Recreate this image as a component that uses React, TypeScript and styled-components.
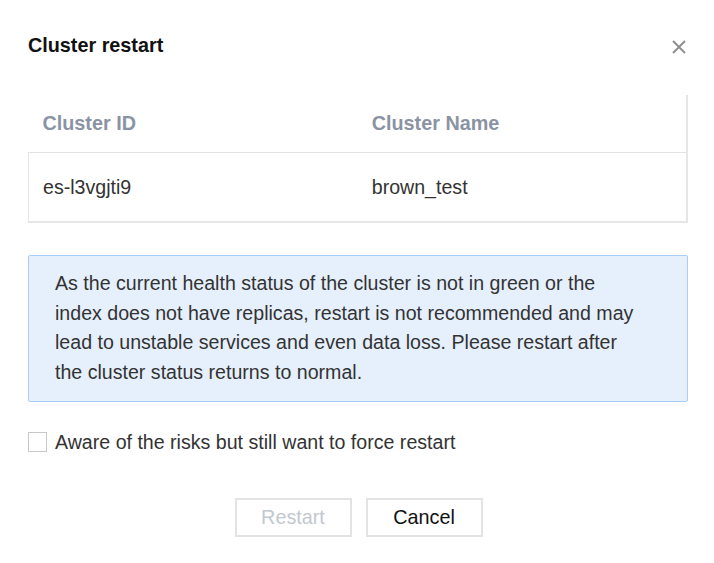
import React, { useState } from 'react';
import styled, { createGlobalStyle } from 'styled-components';

const GlobalStyle = createGlobalStyle`
  html, body {
    margin: 0;
    padding: 0;
    background: #fff;
  }
  body {
    font-family: "Liberation Sans", Arial, sans-serif;
    color: #333;
  }
`;

interface IRow {
  id: string;
  name: string;
}

const rows: IRow[] = [{ id: 'es-l3vgjti9', name: 'brown_test' }];

const App: React.FC = () => {
  const [forced, setForced] = useState(false);

  return (
    <>
      <GlobalStyle />
      <Dialog>
        <Header>
          <Title>Cluster restart</Title>
          <CloseButton aria-label='close'>
            <svg width='16' height='16' viewBox='0 0 16 16'>
              <path d='M2 2L14 14M14 2L2 14' stroke='#8c8c8c' strokeWidth='1.8' />
            </svg>
          </CloseButton>
        </Header>

        <Table>
          <thead>
            <tr>
              <HeadCell>Cluster ID</HeadCell>
              <HeadCell isLast>Cluster Name</HeadCell>
            </tr>
          </thead>
          <tbody>
            {rows.map((row) => (
              <tr key={row.id}>
                <BodyCell>{row.id}</BodyCell>
                <BodyCell>{row.name}</BodyCell>
              </tr>
            ))}
          </tbody>
        </Table>

        <Alert>
          As the current health status of the cluster is not in green or the
          index does not have replicas, restart is not recommended and may lead
          to unstable services and even data loss. Please restart after the
          cluster status returns to normal.
        </Alert>

        <CheckRow>
          <Box checked={forced} onClick={() => setForced((prev) => !prev)} />
          <CheckLabel onClick={() => setForced((prev) => !prev)}>
            Aware of the risks but still want to force restart
          </CheckLabel>
        </CheckRow>

        <Footer>
          <Button disabled={!forced}>Restart</Button>
          <Button>Cancel</Button>
        </Footer>
      </Dialog>
    </>
  );
};

export default App;

const Dialog = styled.div`
  display: flex;
  flex-direction: column;
  padding: 0 26px 0 28px;
  width: 714px;
  box-sizing: border-box;
`;

const Header = styled.div`
  display: flex;
  align-items: center;
  justify-content: space-between;
  height: 26px;
  margin-top: 32px;
  margin-bottom: 37px;
`;

const Title = styled.h2`
  margin: 0;
  font-size: 19.8px;
  font-weight: bold;
  color: #111;
`;

const CloseButton = styled.button`
  border: none;
  background: none;
  padding: 0;
  margin-right: 1px;
  margin-top: 4px;
  display: flex;
  cursor: pointer;
`;

const Table = styled.table`
  width: 100%;
  border-collapse: collapse;
  table-layout: fixed;
  font-size: 19.6px;
`;

const HeadCell = styled.th<{ isLast?: boolean }>`
  height: 57px;
  padding: 0 14px;
  text-align: left;
  font-weight: bold;
  font-size: 19.8px;
  color: #8a93a4;
  border-bottom: 1px solid #e3e3e3;
  ${(props) => props.isLast && 'border-right: 2px solid #e6e6e6;'}
`;

const BodyCell = styled.td`
  height: 68px;
  padding: 0 14px;
  color: #333;
  border-bottom: 2px solid #e6e6e6;
  &:first-child {
    border-left: 1px solid #e6e6e6;
  }
  &:last-child {
    border-right: 2px solid #e6e6e6;
  }
`;

const Alert = styled.div`
  margin-top: 32px;
  padding: 13px 40px 14px 26px;
  background: #e6f0fd;
  border: 1px solid #a8cdf8;
  border-radius: 2px;
  font-size: 19.6px;
  line-height: 29.5px;
  color: #333;
`;

const CheckRow = styled.label`
  display: flex;
  align-items: center;
  gap: 8px;
  margin-top: 30px;
  height: 20px;
`;

const Box = styled.span<{ checked: boolean }>`
  width: 17px;
  height: 18px;
  border: 1px solid #c8c8c8;
  background: ${(props) => (props.checked ? '#006eff' : '#fff')};
  cursor: pointer;
`;

const CheckLabel = styled.span`
  font-size: 19.6px;
  color: #333;
  cursor: pointer;
`;

const Footer = styled.div`
  display: flex;
  justify-content: center;
  gap: 14px;
  margin-top: 46px;
  padding-left: 1px;
`;

const Button = styled.button`
  width: 117px;
  height: 39px;
  background: #fff;
  border: 2px solid #e3e3e3;
  font-family: "Liberation Sans", Arial, sans-serif;
  font-size: 19.8px;
  color: #111;
  cursor: pointer;
  &:disabled {
    color: #c2c8d1;
    cursor: not-allowed;
  }
`;
